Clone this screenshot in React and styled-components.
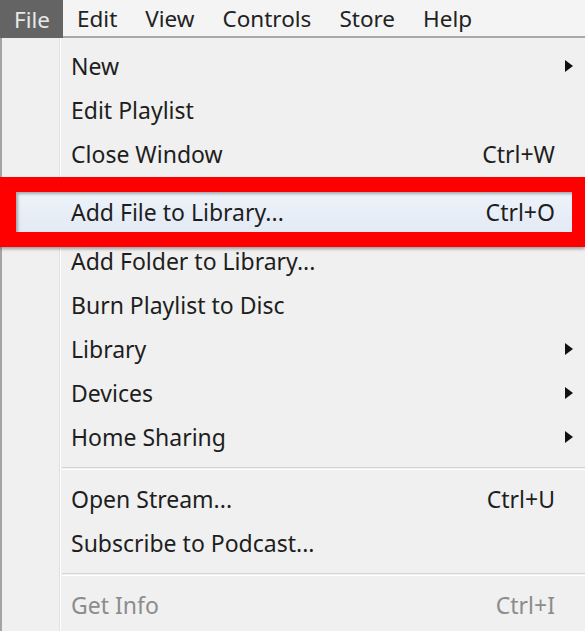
import React from 'react';
import styled, { createGlobalStyle } from 'styled-components';

const GlobalStyle = createGlobalStyle`
  html, body {
    margin: 0;
    padding: 0;
    background: #f0f0f0;
  }
  body {
    font-family: 'Noto Sans', 'Open Sans', sans-serif;
    color: #1e1e1e;
    overflow: hidden;
  }
`;

const Page = styled.div`
  width: 585px;
  height: 631px;
  display: flex;
  flex-direction: column;
  background: #f0f0f0;
`;

const MenuBar = styled.div`
  display: flex;
  height: 36px;
  background: #f4f4f4;
  border-bottom: 2px solid #a9a9a9;
  font-size: 22.5px;
`;

const BarItem = styled.div`
  display: flex;
  align-items: center;
  height: ${p => (p.$open ? '38px' : '36px')};
  padding: ${p => (p.$open ? '0 13px 0 14px' : '0 14px')};
  margin-bottom: ${p => (p.$open ? '-2px' : '0')};
  background: ${p => (p.$open ? '#646464' : 'transparent')};
  color: ${p => (p.$open ? '#e8e8e8' : '#222')};
  position: relative;
  z-index: 1;
`;

const Dropdown = styled.div`
  flex: 1;
  display: flex;
  flex-direction: column;
  padding-top: 6px;
  border-left: 2px solid #a4a4a4;
  background:
    linear-gradient(to right, transparent 57px, #dfe0e0 57px, #dfe0e0 58px, #fff 58px, #fff 59px, transparent 59px),
    #f0f0f0;
`;

const Item = styled.div`
  display: flex;
  align-items: center;
  height: 44px;
  padding: 0 30px 0 69px;
  font-size: 23px;
  color: ${p => (p.$disabled ? '#8c8c8c' : '#1e1e1e')};
`;

const Label = styled.span`
  flex: 1;
  white-space: nowrap;
`;

const Shortcut = styled.span`
  white-space: nowrap;
`;

const Arrow = styled.span`
  width: 0;
  height: 0;
  margin-right: -18px;
  border-top: 6px solid transparent;
  border-bottom: 6px solid transparent;
  border-left: 8px solid #111;
`;

const Separator = styled.div`
  height: 18px;
  display: flex;
  align-items: center;
  padding-left: 60px;

  &::after {
    content: '';
    flex: 1;
    height: 1px;
    border-top: 1px solid #d4d4d4;
    border-bottom: 1px solid #fff;
  }
`;

const Callout = styled.div`
  position: relative;
  z-index: 2;
  margin: 1px 0 -8px -2px;
  border: solid #ff0000;
  border-width: 15px 13px 15px 16px;
  box-shadow: 0 2px 3px rgba(0, 0, 0, 0.35);
`;

const Highlight = styled(Item)`
  height: 40px;
  padding: 0 17px 0 55px;
  background: linear-gradient(#eef3fa, #e3eaf4);
  box-shadow: inset 2px 2px 3px rgba(0, 0, 0, 0.3);
`;

const menus = ['Edit', 'View', 'Controls', 'Store', 'Help'];

const MenuRow = ({ label, shortcut, submenu, disabled }) => (
  <Item $disabled={disabled}>
    <Label>{label}</Label>
    {shortcut && <Shortcut>{shortcut}</Shortcut>}
    {submenu && <Arrow />}
  </Item>
);

export default function App() {
  return (
    <Page>
      <GlobalStyle />
      <MenuBar>
        <BarItem $open>File</BarItem>
        {menus.map(m => (
          <BarItem key={m}>{m}</BarItem>
        ))}
      </MenuBar>
      <Dropdown>
        <MenuRow label="New" submenu />
        <MenuRow label="Edit Playlist" />
        <MenuRow label="Close Window" shortcut="Ctrl+W" />
        <Callout>
          <Highlight>
            <Label>Add File to Library...</Label>
            <Shortcut>Ctrl+O</Shortcut>
          </Highlight>
        </Callout>
        <MenuRow label="Add Folder to Library..." />
        <MenuRow label="Burn Playlist to Disc" />
        <MenuRow label="Library" submenu />
        <MenuRow label="Devices" submenu />
        <MenuRow label="Home Sharing" submenu />
        <Separator />
        <MenuRow label="Open Stream..." shortcut="Ctrl+U" />
        <MenuRow label="Subscribe to Podcast..." />
        <Separator />
        <MenuRow label="Get Info" shortcut="Ctrl+I" disabled />
      </Dropdown>
    </Page>
  );
}
